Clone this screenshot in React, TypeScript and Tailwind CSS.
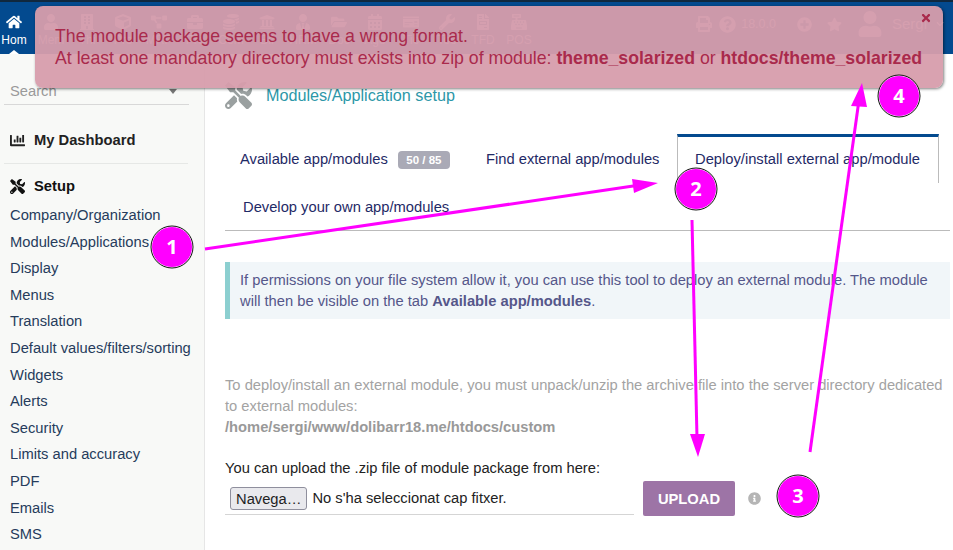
import React from 'react';
import {
  FaHome, FaUser, FaBuilding, FaCube, FaProjectDiagram, FaBriefcase, FaCoins, FaUniversity,
  FaUserTie, FaFolderOpen, FaCalendarAlt, FaMoneyCheck, FaWrench, FaFileInvoice, FaCashRegister,
  FaPrint, FaQuestionCircle, FaPlusCircle, FaStar, FaChevronDown, FaTools, FaChartBar, FaInfoCircle, FaTimes,
} from 'react-icons/fa';

const SETUP_LINKS = [
  'Company/Organization', 'Modules/Applications', 'Display', 'Menus', 'Translation',
  'Default values/filters/sorting', 'Widgets', 'Alerts', 'Security', 'Limits and accuracy',
  'PDF', 'Emails', 'SMS',
];

const TOP_ITEMS = [
  { icon: FaUser, label: 'Mem' }, { icon: FaBuilding, label: 'Thi' }, { icon: FaCube, label: 'Pro' },
  { icon: FaProjectDiagram, label: 'MRP' }, { icon: FaBriefcase, label: 'Pro' }, { icon: FaCoins, label: 'Com' },
  { icon: FaUniversity, label: 'Bil' }, { icon: FaUserTie, label: 'HRM' }, { icon: FaFolderOpen, label: 'Doc' },
  { icon: FaCalendarAlt, label: 'Age' }, { icon: FaMoneyCheck, label: 'Tic' }, { icon: FaWrench, label: 'Too' },
  { icon: FaFileInvoice, label: 'TFD' }, { icon: FaCashRegister, label: 'POS' },
];

function TopBar() {
  return (
    <header className="h-[54px] shrink-0 bg-[#034a8f] border-t-2 border-[#10283f] flex text-white">
      <div className="relative w-[28px] shrink-0 flex flex-col items-center pt-[12px]">
        <FaHome className="text-[16px]" />
        <span className="text-[12px] leading-[14px] mt-[3px]">Hom</span>
        <span className="absolute bottom-0 left-[9px] border-x-[5px] border-x-transparent border-b-[4px] border-b-white" />
      </div>
      <nav className="flex pl-[5px] text-white/70">
        {TOP_ITEMS.map((item, i) => (
          <div key={i} className="w-[36px] flex flex-col items-center pt-[12px]">
            <item.icon className="text-[16px]" />
            <span className="text-[12px] leading-[14px] mt-[3px]">{item.label}</span>
          </div>
        ))}
      </nav>
      <div className="ml-auto flex items-center pr-[5px] pb-[8px] text-white/70">
        <FaPrint className="text-[16px]" />
        <FaQuestionCircle className="text-[17px] ml-[7px]" />
        <span className="text-[12.5px] ml-[5px]">18.0.0</span>
        <FaPlusCircle className="text-[15px] ml-[21px]" />
        <FaStar className="text-[15px] ml-[15px]" />
        <FaUser className="text-[26px] ml-[15px]" />
        <span className="text-[15px] ml-[9px]">Sergi</span>
        <FaChevronDown className="text-[8px] ml-[9px] mr-[4px]" />
      </div>
    </header>
  );
}

function Sidebar() {
  return (
    <aside className="w-[205px] shrink-0 bg-[#f8f9f7] border-r border-[#e6e6e6] px-[4px] text-[14.72px]">
      <div className="mt-[24px] h-[27px] border-b border-[#d8d8d8] flex items-center justify-between pl-[6px] pr-[12px] mr-[11px] text-[#9a9a9a]">
        <span>Search</span>
        <span className="border-x-[4px] border-x-transparent border-t-[5px] border-t-[#777]" />
      </div>
      <div className="mt-[23px] pl-[6px] flex items-center gap-[9px] h-[24px] font-bold text-[#222]">
        <FaChartBar className="text-[15px] w-[15px]" />
        <span>My Dashboard</span>
      </div>
      <div className="mt-[11px] mr-[12px] border-t border-[#e6e8e6]" />
      <div className="mt-[10px] pl-[6px] flex items-center gap-[9px] h-[24px] font-bold text-[#111]">
        <FaTools className="text-[15px] w-[15px]" />
        <span>Setup</span>
      </div>
      <ul className="mt-[4px] pl-[6px] text-[#263c5c]">
        {SETUP_LINKS.map((link) => (
          <li key={link} className="h-[26.6px] leading-[26.6px] whitespace-nowrap">{link}</li>
        ))}
      </ul>
    </aside>
  );
}

function Tabs() {
  return (
    <div className="mt-[25px] ml-[20px] mr-[3px] border-b border-[#bbbbbb] text-[14.72px] text-[#1f2a66] h-[97px]">
      <div className="flex h-[49px]">
        <div className="pl-[15px] pt-[14px] w-[261px] shrink-0 flex items-start">
          <span>Available app/modules</span>
          <span className="ml-[10px] mt-[3px] w-[52px] text-center h-[18px] leading-[18px] rounded-[4px] bg-[#aaaab6] text-white text-[11.5px] font-bold">50 / 85</span>
        </div>
        <div className="pt-[14px] w-[191px] shrink-0 whitespace-nowrap">Find external app/modules</div>
        <div className="border-t-[3px] border-t-[#034a8f] border-x border-x-[#bbbbbb] w-[262px] shrink-0 pl-[17px] pt-[11px] whitespace-nowrap">Deploy/install external app/module</div>
      </div>
      <div className="pl-[18px] pt-[13px]">Develop your own app/modules</div>
    </div>
  );
}

function Annotations() {
  const magenta = '#ff00ff';
  const badges = [
    { n: 1, x: 172, y: 247 }, { n: 2, x: 696, y: 189 }, { n: 3, x: 798, y: 496 }, { n: 4, x: 899, y: 96 },
  ];
  return (
    <svg className="absolute inset-0 z-20 pointer-events-none" width="953" height="550">
      <line x1="205" y1="249" x2="640" y2="185" stroke={magenta} strokeWidth="3" />
      <polygon points="658,183 634,193 632,179" fill={magenta} />
      <line x1="692" y1="220" x2="697" y2="438" stroke={magenta} strokeWidth="3" />
      <polygon points="698,457 690,434 705,434" fill={magenta} />
      <line x1="810" y1="452" x2="859" y2="100" stroke={magenta} strokeWidth="3" />
      <polygon points="862,83 867,107 851,106" fill={magenta} />
      {badges.map((b) => (
        <g key={b.n}>
          <circle cx={b.x} cy={b.y} r="20.5" fill={magenta} stroke="#ffffff" strokeWidth="1" />
          <circle cx={b.x} cy={b.y} r="21" fill="none" stroke="#111111" strokeWidth="1" />
          <text x={b.x} y={b.y + 7} textAnchor="middle" fill="#ffffff" fontSize="20" fontWeight="700" fontFamily="'Open Sans', sans-serif">{b.n}</text>
        </g>
      ))}
    </svg>
  );
}

export default function App() {
  return (
    <div className="relative w-[953px] h-[550px] overflow-hidden bg-white flex flex-col font-['Liberation_Sans',Arial,sans-serif]">
      <TopBar />
      <div className="flex flex-1 min-h-0">
        <Sidebar />
        <main className="flex-1 min-w-0">
          <div className="mt-[27px] ml-[20px] h-[28px] flex items-center gap-[14px]">
            <FaTools className="text-[27px] text-[#9aa0a0]" />
            <h1 className="text-[16.2px] text-[#2d97a8]">Modules/Application setup</h1>
          </div>
          <Tabs />
          <div className="mt-[31px] ml-[20px] mr-[3px] h-[57px] bg-[#f1f6f9] border-l-[5px] border-[#8ccfd0] pl-[10px] pt-[8px] text-[14.72px] leading-[21px] text-[#55578a]">
            If permissions on your file system allow it, you can use this tool to deploy an external module. The module
            <br />
            will then be visible on the tab <b>Available app/modules</b>.
          </div>
          <div className="mt-[56px] ml-[20px] text-[14.72px] leading-[21px] text-[#a3a3a3] whitespace-nowrap">
            To deploy/install an external module, you must unpack/unzip the archive file into the server directory dedicated
            <br />
            to external modules:
            <br />
            <b className="text-[#999999]">/home/sergi/www/dolibarr18.me/htdocs/custom</b>
          </div>
          <p className="mt-[20px] ml-[20px] text-[14.72px] leading-[21px] text-[#222]">You can upload the .zip file of module package from here:</p>
          <div className="mt-[2px] ml-[20px] flex items-center">
            <div className="w-[409px] h-[32px] border-b border-[#d5d5d5] pl-[5px] flex items-center gap-[5px] text-[14.72px] text-[#222]">
              <button type="button" className="h-[23px] px-[5px] rounded-[3px] border border-[#8f8f9d] bg-[#e9e9ed]">Navega…</button>
              <span>No s'ha seleccionat cap fitxer.</span>
            </div>
            <button type="button" className="ml-[9px] w-[92px] h-[35px] pt-[1px] rounded-[2px] bg-[#9d74a6] text-white text-[14.72px] font-bold">UPLOAD</button>
            <FaInfoCircle className="ml-[13px] text-[13px] text-[#b5b5b5]" />
          </div>
        </main>
      </div>

      <div className="absolute z-10 left-[35px] top-[6px] w-[908px] h-[82px] rounded-[8px] bg-[#d79dac]/95 shadow-[1px_1px_3px_rgba(0,0,0,0.5)] pl-[20px] pt-[19px] text-[17.7px] leading-[22px] text-[#a92a4c]">
        The module package seems to have a wrong format.
        <br />
        At least one mandatory directory must exists into zip of module: <b>theme_solarized</b> or <b>htdocs/theme_solarized</b>
        <FaTimes className="absolute right-[11px] top-[6px] text-[12px] text-[#a92a4c]" />
      </div>

      <Annotations />
    </div>
  );
}
